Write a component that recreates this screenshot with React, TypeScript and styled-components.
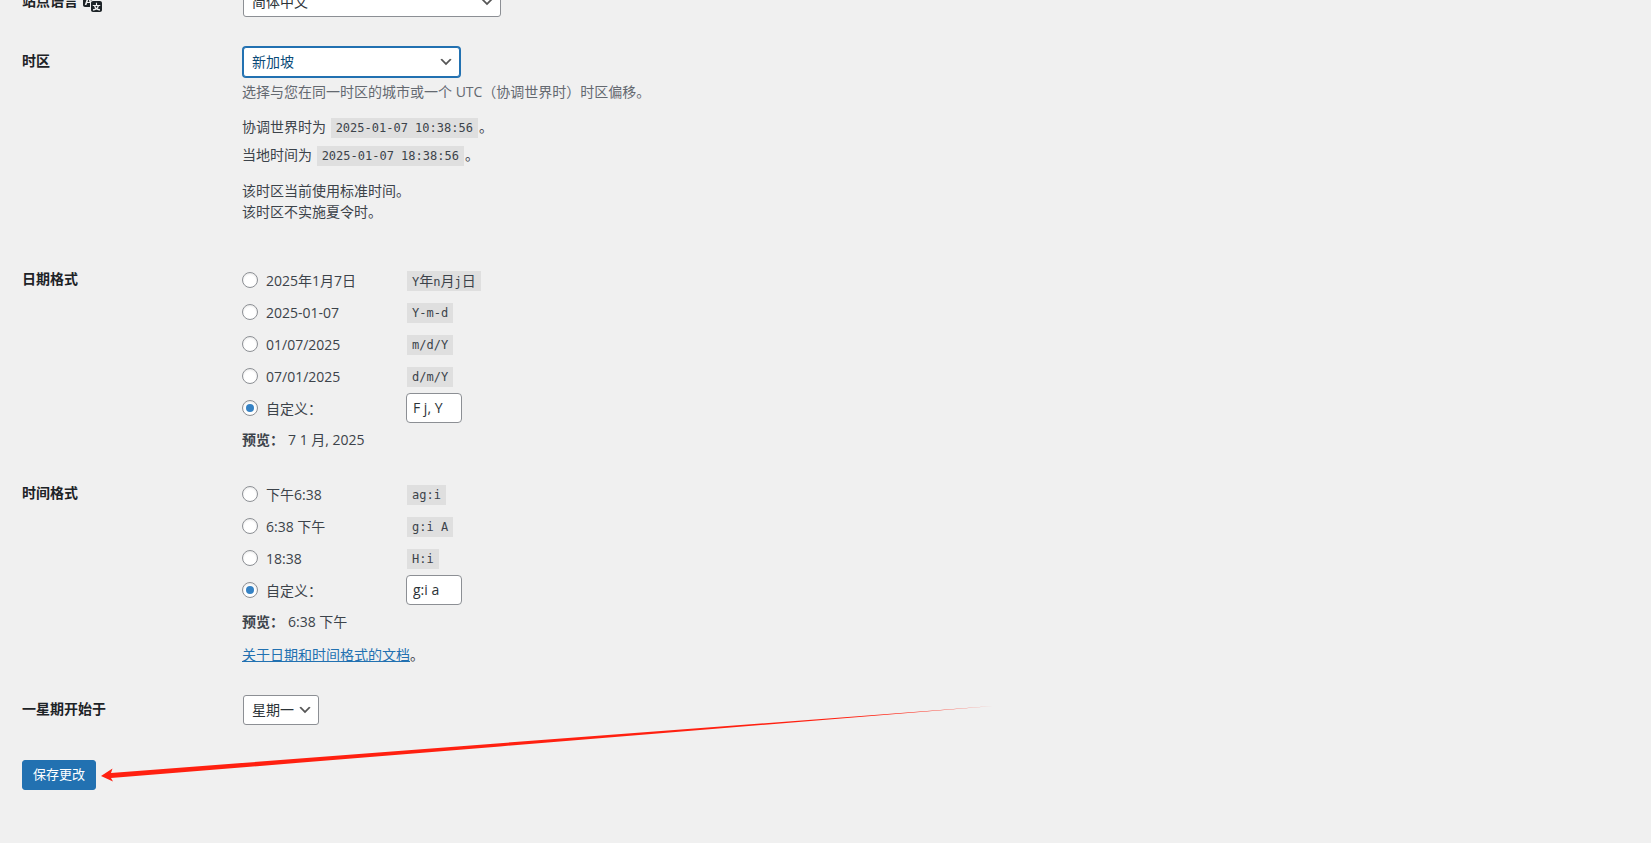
import React from "react";
import styled, { createGlobalStyle, css } from "styled-components";

const GlobalStyle = createGlobalStyle`
  *, *::before, *::after { box-sizing: border-box; }
  body {
    margin: 0;
    background: #f0f0f0;
    color: #3c434a;
    font-family: "Open Sans", "Noto Sans CJK SC", sans-serif;
    font-size: 14px;
    line-height: 21px;
    overflow-x: hidden;
  }
`;

const SettingsForm = styled.form`
  /* the page is scrolled so that the first row is partly out of view */
  margin: -28px 22px 0;
  padding-bottom: 40px;
`;

const Row = styled.div<{ $compact?: boolean }>`
  display: grid;
  grid-template-columns: 220px minmax(0, 1fr);
  padding: ${(p) => (p.$compact ? 11 : 15)}px 0;
`;

const titleStyle = css<{ $compact?: boolean }>`
  display: flex;
  align-items: flex-start;
  align-self: start;
  gap: 5px;
  color: #1d2327;
  font-weight: 700;
  line-height: ${(p) => (p.$compact ? 30 : 28)}px;
`;

const Title = styled.label`
  ${titleStyle}
`;

const GroupTitle = styled.div<{ $compact?: boolean }>`
  ${titleStyle}
`;

const SelectBox = styled.div`
  display: grid;
  width: fit-content;
  max-width: 100%;
  margin-left: 1px;
  align-items: center;
`;

const Select = styled.select<{ $width?: number; $focused?: boolean }>`
  grid-area: 1 / 1;
  appearance: none;
  width: ${(p) => (p.$width ? `${p.$width}px` : "auto")};
  max-width: 100%;
  height: 30px;
  margin: 0;
  padding: 0 24px 2px 8px;
  border: 1px solid ${(p) => (p.$focused ? "#2271b1" : "#8c8f94")};
  border-radius: 3px;
  outline: none;
  box-shadow: ${(p) => (p.$focused ? "0 0 0 1px #2271b1" : "none")};
  background: #fff;
  color: ${(p) => (p.$focused ? "#0a4b78" : "#2c3338")};
  font: inherit;
`;

const Chevron = styled.svg`
  grid-area: 1 / 1;
  justify-self: end;
  width: 16px;
  height: 16px;
  margin-right: 6px;
  pointer-events: none;
`;

const TranslateIcon = styled.svg`
  width: 20px;
  height: 20px;
  margin-top: 6px;
  fill: #1d2327;
`;

const Description = styled.p`
  margin: 5px 0 0;
  line-height: 20px;
  color: #646970;
`;

const Clock = styled.p`
  margin: 11px 0 0;
  line-height: 28px;
`;

const ZoneNotes = styled.p`
  margin: 11px 0 16px;
`;

const Code = styled.code`
  display: inline-block;
  height: 20px;
  margin: 0 1px;
  padding: 3px 5px 2px;
  background: #dfdfdf;
  font-family: "DejaVu Sans Mono", "Noto Sans CJK SC", monospace;
  font-size: 12px;
  line-height: 15px;
`;

const Wide = styled.span`
  font-size: 14px;
  line-height: 14px;
`;

const Choices = styled.fieldset`
  min-width: 0;
  margin: 0;
  padding: 0;
  border: 0;
`;

const Choice = styled.div`
  display: flex;
  align-items: center;
  height: 32px;

  ${Code} {
    margin-top: 2px;
  }
`;

const ChoiceLabel = styled.label`
  display: flex;
  align-items: center;
  gap: 8px;
  width: 164px;
`;

const Radio = styled.input`
  appearance: none;
  display: grid;
  place-items: center;
  width: 16px;
  height: 16px;
  margin: 0;
  border: 1px solid #8c8f94;
  border-radius: 50%;
  background: #fff;
  box-shadow: inset 0 1px 2px rgba(0, 0, 0, 0.1);

  &:checked::before {
    content: "";
    width: 8px;
    height: 8px;
    border-radius: 50%;
    background: #3582c4;
  }
`;

const FormatInput = styled.input`
  width: 56px;
  height: 30px;
  margin: 0;
  padding: 0 6px 1px;
  border: 1px solid #8c8f94;
  border-radius: 4px;
  background: #fff;
  color: #2c3338;
  font: inherit;
`;

const Preview = styled.p`
  display: flex;
  gap: 4px;
  margin: 0;
  line-height: 32px;
`;

const DocNote = styled.p`
  margin: 6px 0 4px;
`;

const DocLink = styled.a`
  color: #2271b1;
  text-decoration: underline;
`;

const Submit = styled.div`
  position: relative;
  padding-top: 20px;
`;

const SaveButton = styled.button`
  display: block;
  height: 30px;
  margin: 0;
  padding: 0 10px 2px;
  border: 1px solid #2271b1;
  border-radius: 3px;
  background: #2271b1;
  color: #fff;
  font-family: inherit;
  font-size: 13px;
  line-height: 26px;
`;

const Arrow = styled.svg`
  position: absolute;
  left: 78px;
  bottom: 0;
  width: 900px;
  height: 90px;
  fill: #ff2010;
  pointer-events: none;
`;

type DropDownProps = { id: string; options: string[]; width?: number; focused?: boolean };

function DropDown({ id, options, width, focused }: DropDownProps) {
  return (
    <SelectBox>
      <Select id={id} $width={width} $focused={focused}>
        {options.map((o) => (
          <option key={o}>{o}</option>
        ))}
      </Select>
      <Chevron viewBox="0 0 20 20" aria-hidden="true">
        <path d="M5 6l5 5 5-5 2 1-7 7-7-7 2-1z" fill="#555" />
      </Chevron>
    </SelectBox>
  );
}

function FormatCode({ value }: { value: string }) {
  return (
    <Code>
      {value.split(/([\u4e00-\u9fff])/).map((part, i) => (i % 2 ? <Wide key={i}>{part}</Wide> : part))}
    </Code>
  );
}

type FormatGroupProps = {
  name: string;
  title: string;
  formats: { label: string; code: string }[];
  custom: string;
  preview: string;
  children?: React.ReactNode;
};

function FormatGroup({ name, title, formats, custom, preview, children }: FormatGroupProps) {
  return (
    <Row $compact>
      <GroupTitle $compact id={`${name}-title`}>
        {title}
      </GroupTitle>
      <Choices aria-labelledby={`${name}-title`}>
        {formats.map((f) => (
          <Choice key={f.code}>
            <ChoiceLabel>
              <Radio type="radio" name={name} value={f.code} />
              {f.label}
            </ChoiceLabel>
            <FormatCode value={f.code} />
          </Choice>
        ))}
        <Choice>
          <ChoiceLabel>
            <Radio type="radio" name={name} value="custom" defaultChecked />
            自定义：
          </ChoiceLabel>
          <FormatInput type="text" aria-label={`${title}：自定义`} defaultValue={custom} />
        </Choice>
        <Preview>
          <strong>预览：</strong>
          <span>{preview}</span>
        </Preview>
        {children}
      </Choices>
    </Row>
  );
}

const dateFormats = [
  { label: "2025年1月7日", code: "Y年n月j日" },
  { label: "2025-01-07", code: "Y-m-d" },
  { label: "01/07/2025", code: "m/d/Y" },
  { label: "07/01/2025", code: "d/m/Y" },
];

const timeFormats = [
  { label: "下午6:38", code: "ag:i" },
  { label: "6:38 下午", code: "g:i A" },
  { label: "18:38", code: "H:i" },
];

export default function App() {
  return (
    <>
      <GlobalStyle />
      <SettingsForm lang="zh-CN" onSubmit={(e) => e.preventDefault()}>
        <Row>
          <Title htmlFor="language">
            站点语言
            <TranslateIcon viewBox="0 0 20 20" aria-hidden="true">
              <path d="M11 7H9.49c-.63 0-1.25.3-1.59.7L7 5H4.13l-2.39 7h1.69l.74-2H7v4H2c-1.1 0-2-.9-2-2V5c0-1.1.9-2 2-2h7c1.1 0 2 .9 2 2v2zM6.51 9H4.49l1-2.93zM10 8h7c1.1 0 2 .9 2 2v7c0 1.1-.9 2-2 2h-7c-1.1 0-2-.9-2-2v-7c0-1.1.9-2 2-2zm7.25 5v-1.08h-3.17V9.75h-1.16v2.17H9.75V13h1.28c.11.85.56 1.85 1.28 2.62-.87.36-1.89.62-2.31.62-.01.02.22.97.2 1.46.84 0 2.21-.5 3.28-1.15 1.09.65 2.48 1.15 3.34 1.15-.02-.49.2-1.44.2-1.46-.43 0-1.49-.27-2.38-.63.7-.77 1.14-1.77 1.25-2.61h1.36zm-3.81 1.93c-.5-.46-.85-1.13-1.01-1.93h2.09c-.17.8-.51 1.47-1 1.93l-.04.03s-.03-.02-.04-.03z" />
            </TranslateIcon>
          </Title>
          <DropDown id="language" width={258} options={["简体中文"]} />
        </Row>

        <Row>
          <Title htmlFor="timezone">时区</Title>
          <div>
            <DropDown id="timezone" width={217} focused options={["新加坡"]} />
            <Description>选择与您在同一时区的城市或一个 UTC（协调世界时）时区偏移。</Description>
            <Clock>
              协调世界时为 <Code>2025-01-07 10:38:56</Code>。<br />
              当地时间为 <Code>2025-01-07 18:38:56</Code>。
            </Clock>
            <ZoneNotes>
              该时区当前使用标准时间。
              <br />
              该时区不实施夏令时。
            </ZoneNotes>
          </div>
        </Row>

        <FormatGroup name="date-format" title="日期格式" formats={dateFormats} custom="F j, Y" preview="7 1 月, 2025" />

        <FormatGroup name="time-format" title="时间格式" formats={timeFormats} custom="g:i a" preview="6:38 下午">
          <DocNote>
            <DocLink href="#formats">关于日期和时间格式的文档</DocLink>。
          </DocNote>
        </FormatGroup>

        <Row>
          <Title htmlFor="week-start">一星期开始于</Title>
          <DropDown id="week-start" options={["星期一"]} />
        </Row>

        <Submit>
          <SaveButton type="submit">保存更改</SaveButton>
          <Arrow viewBox="0 0 900 90" aria-hidden="true">
            <path d="M1 76L12.500 68.500L11 73L400 43.200L893 6L400 46.400L11 78L13 81.500Z" />
          </Arrow>
        </Submit>
      </SettingsForm>
    </>
  );
}
